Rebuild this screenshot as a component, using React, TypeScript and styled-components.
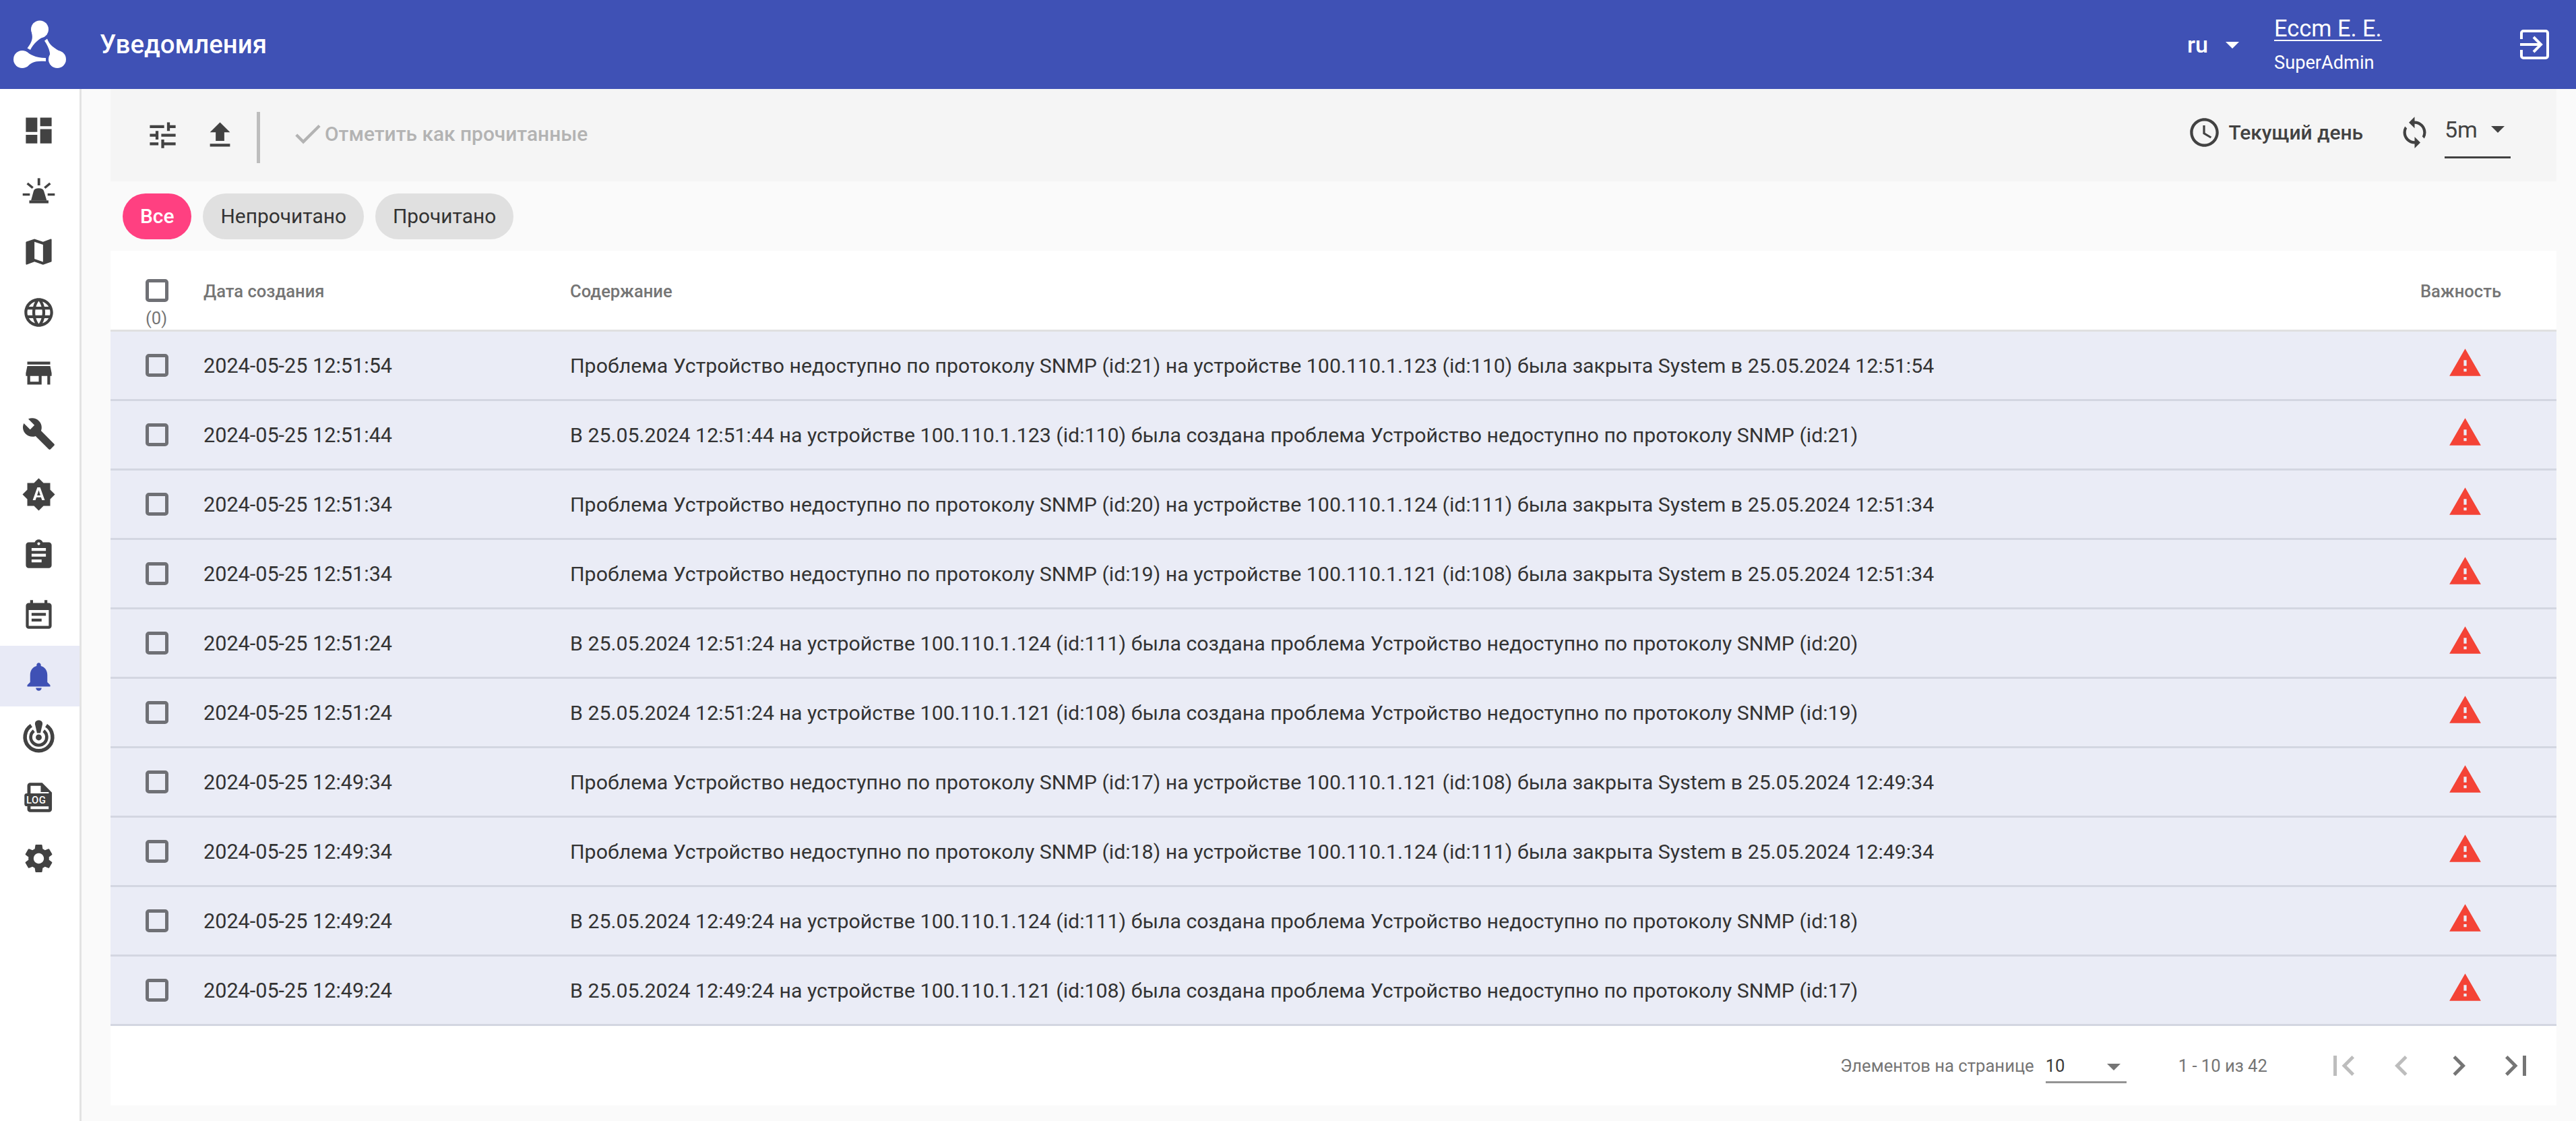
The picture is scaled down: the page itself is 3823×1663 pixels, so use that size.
import React, { FC } from "react";
import styled, { createGlobalStyle } from "styled-components";
import {
  MdAccessTime,
  MdAssignment,
  MdBrightnessAuto,
  MdBuild,
  MdCheck,
  MdChevronLeft,
  MdChevronRight,
  MdDashboard,
  MdEventNote,
  MdFileUpload,
  MdFirstPage,
  MdLanguage,
  MdLastPage,
  MdMap,
  MdNotifications,
  MdSettings,
  MdStore,
  MdSync,
  MdTune,
  MdWarning
} from "react-icons/md";

const GlobalStyle = createGlobalStyle`
  html, body {
    margin: 0;
    padding: 0;
    background: #fafafa;
  }
  body {
    font-family: Roboto, "Noto Sans", sans-serif;
    color: #3a3a3a;
  }
`;

const Shell = styled.div`
  width: 3823px;
  height: 1663px;
  display: flex;
  flex-direction: column;
  overflow: hidden;
`;

const Header = styled.header`
  height: 132px;
  flex: none;
  display: flex;
  align-items: center;
  background: #3f51b5;
  color: #fff;
  box-sizing: border-box;
  padding: 0 37px 0 20px;
`;

const Title = styled.div`
  margin-left: 50px;
  margin-top: -2px;
  font-size: 38.4px;
  font-weight: 500;
`;

const Spacer = styled.div`
  flex: 1;
`;

const Lang = styled.div`
  display: flex;
  align-items: center;
  font-size: 34px;
  font-weight: 500;
`;

const Caret = styled.span<{ $color?: string }>`
  display: inline-block;
  width: 0;
  height: 0;
  border-left: 10px solid transparent;
  border-right: 10px solid transparent;
  border-top: 10px solid ${(p) => p.$color || "#fff"};
`;

const LangCaret = styled.div`
  margin-left: 26px;
  line-height: 0;
`;

const UserBlock = styled.div`
  width: 360px;
  margin-left: 52px;
  display: flex;
  flex-direction: column;
`;

const UserName = styled.a`
  align-self: flex-start;
  font-size: 34.4px;
  line-height: 40px;
  color: #fff;
  text-decoration: underline;
  text-underline-offset: 5px;
  text-decoration-thickness: 2px;
  margin-top: -3px;
`;

const UserRole = styled.div`
  margin-top: 16px;
  font-size: 27.2px;
  line-height: 30px;
`;

const Logout: FC = () => (
  <svg width="51" height="51" viewBox="0 0 51 51" fill="none" stroke="#fff" strokeWidth="4">
    <path d="M7 17V8a3 3 0 0 1 3-3h33a3 3 0 0 1 3 3v34a3 3 0 0 1-3 3H10a3 3 0 0 1-3-3v-9" />
    <path d="M5 25h30M25 14l11 11-11 11" />
  </svg>
);

const Logo: FC = () => (
  <svg width="78" height="72" viewBox="20 28 78 72" fill="#fff">
    <circle cx="59" cy="41.5" r="13" />
    <circle cx="33" cy="86" r="13" />
    <circle cx="85" cy="86" r="13" />
    <path d="M47 47C49 54 48 60 40.5 69.5L45 72C50 62 57 56 70 49Z" />
    <path d="M38 74C44 78 52 84 68 84L68 89C52 87.5 46 91 40 97Z" />
    <path d="M66 58.5L70 55.5C73 64 80 70 93 76L74 94C76 80 74 70 66 58.5Z" />
  </svg>
);

const Body = styled.div`
  flex: 1;
  display: flex;
  min-height: 0;
`;

const Sidebar = styled.nav`
  width: 121px;
  flex: none;
  box-sizing: border-box;
  background: #fff;
  border-right: 3px solid #e3e3e3;
  padding-top: 16px;
`;

const SideItem = styled.div<{ $active?: boolean }>`
  height: 90px;
  display: flex;
  align-items: center;
  justify-content: center;
  padding-right: 4px;
  background: ${(p) => (p.$active ? "#e8eaf6" : "transparent")};
  color: ${(p) => (p.$active ? "#3f51b5" : "#424242")};
`;

const SirenIcon: FC = () => (
  <svg width="51" height="51" viewBox="0 0 24 24" fill="currentColor">
    <path d="M6.6 18.6L8.4 12C8.8 10.6 10 10 12 10C14 10 15.2 10.6 15.6 12L17.6 18.6Z" />
    <rect x="5.4" y="18.5" width="13.4" height="2" />
    <rect x="11.2" y="3" width="1.8" height="5" />
    <rect x="0.8" y="13.6" width="5" height="1.6" />
    <rect x="18.2" y="13.6" width="5" height="1.6" />
    <path d="M4.6 6L8.4 9.2L7.3 10.4L3.5 7.2Z" />
    <path d="M19.4 6L15.6 9.2L16.7 10.4L20.5 7.2Z" />
  </svg>
);

const TargetIcon: FC = () => (
  <svg width="51" height="51" viewBox="0 0 24 24" fill="none" stroke="currentColor">
    <path strokeWidth="2.6" d="M6.8 3.9A9.6 9.6 0 1 0 17.2 3.9" />
    <path strokeWidth="2.2" d="M8.6 7.6A5.6 5.6 0 1 0 15.4 7.6" />
    <circle cx="12" cy="12.2" r="2.1" fill="currentColor" stroke="none" />
    <path
      fill="currentColor"
      stroke="none"
      d="M12 0.2C13.7 0.2 14.8 1.3 14.6 3L13.2 9.2H10.8L9.4 3C9.2 1.3 10.3 0.2 12 0.2Z"
    />
  </svg>
);

const LogIcon: FC = () => (
  <svg width="51" height="51" viewBox="0 0 24 24">
    <path
      fill="currentColor"
      d="M6 1.5H14.4L21.2 8.3V20a2 2 0 0 1-2 2H6a2 2 0 0 1-2-2V3.5a2 2 0 0 1 2-2Z"
    />
    <path fill="#fff" d="M6.3 3.6H13.4V8H19V9.2H6.3Z" />
    <rect x="6.3" y="18" width="12.6" height="1.9" fill="#fff" />
    <rect x="2" y="8.9" width="18.5" height="9" rx="1.6" fill="currentColor" />
    <text x="3.3" y="16" fontSize="7" fontWeight="500" fill="#fff" fontFamily="Roboto" letterSpacing="0.2">
      LOG
    </text>
  </svg>
);

const Main = styled.main`
  flex: 1;
  min-width: 0;
  box-sizing: border-box;
  padding: 0 29px 23px 43px;
  display: flex;
  flex-direction: column;
`;

const Toolbar = styled.div`
  height: 137px;
  flex: none;
  display: flex;
  align-items: center;
  background: #f5f5f5;
  color: #424242;
  box-sizing: border-box;
  padding-left: 35px;
  padding-right: 68px;
`;

const ToolIcon = styled.span`
  display: flex;
  width: 85px;
  justify-content: center;
`;

const ToolDivider = styled.div`
  width: 5px;
  height: 76px;
  margin: 7px 0 0 12px;
  background: #bdbdbd;
`;

const MarkRead = styled.div`
  display: flex;
  align-items: center;
  margin: -5px 0 0 45px;
  color: #b3b3b3;
  font-size: 29.9px;
  font-weight: 500;
`;

const PeriodGroup = styled.div`
  display: flex;
  align-items: center;
  font-size: 29.9px;
  font-weight: 500;
  margin-top: -8px;
`;

const PeriodText = styled.span`
  margin-left: 10px;
`;

const RefreshIcon = styled.span`
  display: flex;
  margin: -8px 0 0 51px;
`;

const RefreshSelect = styled.div`
  width: 98px;
  height: 76px;
  margin: -8px 0 0 19px;
  box-sizing: border-box;
  border-bottom: 3px solid #424242;
  display: flex;
  align-items: center;
  justify-content: space-between;
  padding: 0 9px 6px 0;
  font-size: 34px;
`;

const ChipRow = styled.div`
  height: 103px;
  flex: none;
  display: flex;
  align-items: center;
  gap: 17px;
  padding-left: 18px;
`;

const Chip = styled.div<{ $active?: boolean }>`
  height: 68px;
  box-sizing: border-box;
  padding: 0 26px;
  border-radius: 34px;
  display: flex;
  align-items: center;
  font-size: 29.9px;
  font-weight: ${(p) => (p.$active ? 500 : 400)};
  background: ${(p) => (p.$active ? "#ff4081" : "#e0e0e0")};
  color: ${(p) => (p.$active ? "#fff" : "#333")};
`;

const Card = styled.div`
  background: #fff;
  flex: 1;
  display: flex;
  flex-direction: column;
`;

const GRID = "138px 544px 1fr 272px";

const HeadRow = styled.div`
  height: 120px;
  flex: none;
  box-sizing: border-box;
  display: grid;
  grid-template-columns: ${GRID};
  align-items: start;
  border-bottom: 3px solid #e0e0e0;
  padding-top: 42px;
  font-size: 25.6px;
  font-weight: 500;
  color: #757575;
`;

const HeadLabel = styled.div`
  line-height: 36px;
`;

const HeadImportance = styled(HeadLabel)`
  text-align: center;
  padding-right: 12px;
`;

const SelectCell = styled.div`
  padding-left: 52px;
`;

const Check = styled.div`
  width: 34px;
  height: 34px;
  box-sizing: border-box;
  border: 5px solid #6f7075;
  border-radius: 5px;
`;

const Selected = styled.div`
  font-size: 25.6px;
  line-height: 24px;
  margin-top: 12px;
  color: #757575;
  font-weight: 400;
`;

const Row = styled.div`
  height: 103px;
  flex: none;
  box-sizing: border-box;
  display: grid;
  grid-template-columns: ${GRID};
  align-items: center;
  background: #eaecf6;
  border-bottom: 3px solid #d3d6e1;
  font-size: 30.3px;
  color: #333;
`;

const DateCell = styled.div`
  font-size: 30.6px;
`;

const ImportanceCell = styled.div`
  display: flex;
  justify-content: center;
  color: #f44336;
  margin-top: -8px;
`;

const Footer = styled.div`
  flex: 1;
  display: flex;
  align-items: center;
  justify-content: flex-end;
  padding-right: 17px;
  font-size: 25.6px;
  color: #757575;
`;

const PageSizeSelect = styled.div`
  width: 120px;
  height: 52px;
  box-sizing: border-box;
  margin-left: 17px;
  border-bottom: 3px solid #949494;
  display: flex;
  align-items: flex-start;
  justify-content: space-between;
  padding: 8px 9px 0 0;
  color: #3a3a3a;
  line-height: 36px;
`;

const PageCaret = styled.div`
  margin-top: 15px;
  line-height: 0;
`;

const RangeText = styled.div`
  margin-left: 77px;
  margin-right: 71px;
`;

const PageButton = styled.div<{ $disabled?: boolean }>`
  width: 85.3px;
  display: flex;
  justify-content: center;
  color: ${(p) => (p.$disabled ? "#bdbdbd" : "#757575")};
`;

const sideItems = [
  <MdDashboard size={51} />,
  <SirenIcon />,
  <MdMap size={51} />,
  <MdLanguage size={51} />,
  <MdStore size={51} />,
  <MdBuild size={51} />,
  <MdBrightnessAuto size={51} />,
  <MdAssignment size={51} />,
  <MdEventNote size={51} />,
  <MdNotifications size={51} />,
  <TargetIcon />,
  <LogIcon />,
  <MdSettings size={51} />
];

const closed = (id: number, ip: string, dev: number, at: string) =>
  `Проблема Устройство недоступно по протоколу SNMP (id:${id}) на устройстве ${ip} (id:${dev}) была закрыта System в ${at}`;

const opened = (id: number, ip: string, dev: number, at: string) =>
  `В ${at} на устройстве ${ip} (id:${dev}) была создана проблема Устройство недоступно по протоколу SNMP (id:${id})`;

const rows = [
  ["2024-05-25 12:51:54", closed(21, "100.110.1.123", 110, "25.05.2024 12:51:54")],
  ["2024-05-25 12:51:44", opened(21, "100.110.1.123", 110, "25.05.2024 12:51:44")],
  ["2024-05-25 12:51:34", closed(20, "100.110.1.124", 111, "25.05.2024 12:51:34")],
  ["2024-05-25 12:51:34", closed(19, "100.110.1.121", 108, "25.05.2024 12:51:34")],
  ["2024-05-25 12:51:24", opened(20, "100.110.1.124", 111, "25.05.2024 12:51:24")],
  ["2024-05-25 12:51:24", opened(19, "100.110.1.121", 108, "25.05.2024 12:51:24")],
  ["2024-05-25 12:49:34", closed(17, "100.110.1.121", 108, "25.05.2024 12:49:34")],
  ["2024-05-25 12:49:34", closed(18, "100.110.1.124", 111, "25.05.2024 12:49:34")],
  ["2024-05-25 12:49:24", opened(18, "100.110.1.124", 111, "25.05.2024 12:49:24")],
  ["2024-05-25 12:49:24", opened(17, "100.110.1.121", 108, "25.05.2024 12:49:24")]
];

const App: FC = () => (
  <Shell>
    <GlobalStyle />
    <Header>
      <Logo />
      <Title>Уведомления</Title>
      <Spacer />
      <Lang>
        ru
        <LangCaret>
          <Caret />
        </LangCaret>
      </Lang>
      <UserBlock>
        <UserName>Eccm E. E.</UserName>
        <UserRole>SuperAdmin</UserRole>
      </UserBlock>
      <Logout />
    </Header>

    <Body>
      <Sidebar>
        {sideItems.map((icon, i) => (
          <SideItem key={i} $active={i === 9}>
            {icon}
          </SideItem>
        ))}
      </Sidebar>

      <Main>
        <Toolbar>
          <ToolIcon>
            <MdTune size={51} />
          </ToolIcon>
          <ToolIcon>
            <MdFileUpload size={51} />
          </ToolIcon>
          <ToolDivider />
          <MarkRead>
            <MdCheck size={51} />
            <span>Отметить как прочитанные</span>
          </MarkRead>
          <Spacer />
          <PeriodGroup>
            <MdAccessTime size={51} />
            <PeriodText>Текущий день</PeriodText>
          </PeriodGroup>
          <RefreshIcon>
            <MdSync size={51} />
          </RefreshIcon>
          <RefreshSelect>
            5m
            <Caret $color="#424242" />
          </RefreshSelect>
        </Toolbar>

        <ChipRow>
          <Chip $active>Все</Chip>
          <Chip>Непрочитано</Chip>
          <Chip>Прочитано</Chip>
        </ChipRow>

        <Card>
          <HeadRow>
            <SelectCell>
              <Check />
              <Selected>(0)</Selected>
            </SelectCell>
            <HeadLabel>Дата создания</HeadLabel>
            <HeadLabel>Содержание</HeadLabel>
            <HeadImportance>Важность</HeadImportance>
          </HeadRow>

          {rows.map(([date, text], i) => (
            <Row key={i}>
              <SelectCell>
                <Check />
              </SelectCell>
              <DateCell>{date}</DateCell>
              <div>{text}</div>
              <ImportanceCell>
                <MdWarning size={51} />
              </ImportanceCell>
            </Row>
          ))}

          <Footer>
            Элементов на странице
            <PageSizeSelect>
              10
              <PageCaret>
                <Caret $color="#757575" />
              </PageCaret>
            </PageSizeSelect>
            <RangeText>1 - 10 из 42</RangeText>
            <PageButton $disabled>
              <MdFirstPage size={60} />
            </PageButton>
            <PageButton $disabled>
              <MdChevronLeft size={60} />
            </PageButton>
            <PageButton>
              <MdChevronRight size={60} />
            </PageButton>
            <PageButton>
              <MdLastPage size={60} />
            </PageButton>
          </Footer>
        </Card>
      </Main>
    </Body>
  </Shell>
);

export default App;
